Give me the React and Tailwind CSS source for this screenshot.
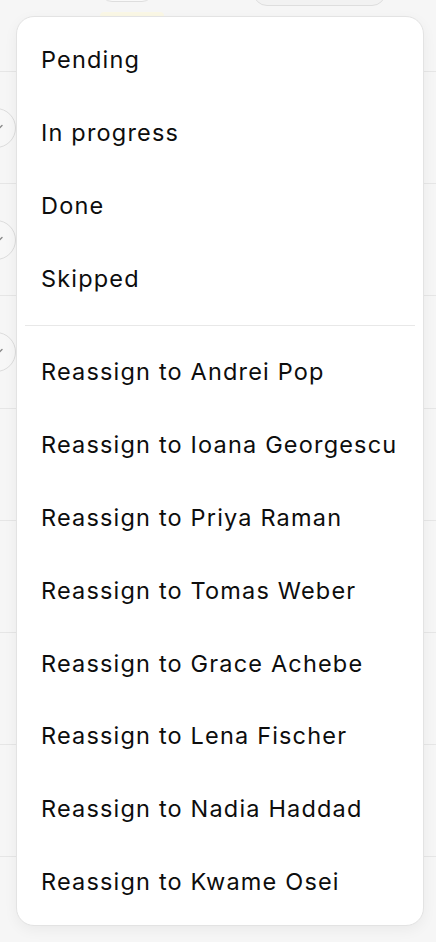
import React from "react";

const statuses = ["Pending", "In progress", "Done", "Skipped"];

const people = [
  "Andrei Pop",
  "Ioana Georgescu",
  "Priya Raman",
  "Tomas Weber",
  "Grace Achebe",
  "Lena Fischer",
  "Nadia Haddad",
  "Kwame Osei",
];

const MenuItem = ({ children }) => (
  <div className="flex h-[72.8px] items-center whitespace-nowrap rounded-[10px] pl-[17.5px] text-[23.5px] tracking-[0.05em] text-[#0d0d0d] cursor-default">
    {children}
  </div>
);

const TaskRow = ({ check }) => (
  <div className="flex h-[112.2px] items-center border-b border-[#e6e6e6]">
    {check ? (
      <div className="ml-[-24px] flex h-10 w-10 items-center justify-center rounded-full border border-[#dcdcdc] bg-[#f7f7f7]">
        <svg className="ml-[4px] h-3 w-3" viewBox="0 0 12 12" fill="none">
          <path d="M2 6.5l2.5 2.5L10 3.5" stroke="#8a8a8a" strokeWidth="1.4" strokeLinecap="round" strokeLinejoin="round" />
        </svg>
      </div>
    ) : null}
  </div>
);

export default function App() {
  return (
    <div
      className="relative h-[942px] w-full overflow-hidden bg-[#f6f6f6]"
      style={{ fontFamily: "Inter, 'Noto Sans', sans-serif" }}
    >
      {/* page behind the menu */}
      <div className="flex h-[72px] items-start border-b border-[#e6e6e6]">
        <div className="ml-[100px] mt-[-28px] h-[30px] w-[54px] rounded-[12px] border border-[#dedede] bg-[#f9f9f9]" />
        <div className="ml-[-54px] mt-[12px] h-[8px] w-[64px] rounded-full bg-[#fbf8e6]" />
        <div className="ml-[89px] mt-[-26px] h-[32px] w-[133px] rounded-[14px] border border-[#dedede] bg-[#f2f2f2]" />
      </div>
      <TaskRow check />
      <TaskRow check />
      <TaskRow check />
      <TaskRow />
      <TaskRow />
      <TaskRow />
      <TaskRow />
      <div className="flex h-[100px] items-start">
        <div className="ml-[254px] mt-[36px] h-[32px] w-[132px] rounded-[14px] bg-[#e6e6e6]" />
      </div>

      {/* dropdown menu */}
      <div className="absolute left-4 top-4 w-[408px] rounded-[18px] border border-[#e3e3e3] bg-white px-[6.5px] py-[6.5px] shadow-[0_4px_14px_rgba(0,0,0,0.05)]">
        {statuses.map((s) => (
          <MenuItem key={s}>{s}</MenuItem>
        ))}
        <div className="mx-[1.5px] my-[10px] h-px bg-[#e8e8e8]" />
        {people.map((p) => (
          <MenuItem key={p}>Reassign to {p}</MenuItem>
        ))}
      </div>
    </div>
  );
}
